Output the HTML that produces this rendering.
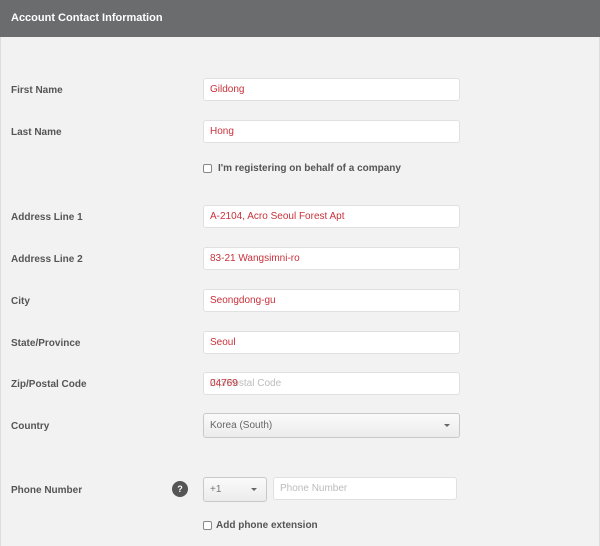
<html><head><style>
body{margin:0;width:600px;height:546px;background:#f2f2f2;font-family:"Liberation Sans",sans-serif;position:relative;overflow:hidden}
.hd{position:absolute;left:0;top:0;width:600px;height:37px;background:#6b6c6e;color:#fff;font-weight:bold;font-size:11px;line-height:37px;text-indent:11px}
.lb{position:absolute;left:11px;font-size:10px;color:#555;font-weight:bold}
.in{position:absolute;left:203px;width:255px;height:21px;background:#fff;border:1px solid #e0e0e0;border-radius:3px;font-size:10px;line-height:21px;color:#c8313a;text-indent:6px}
.cb{position:absolute;left:203px;width:7px;height:7px;border:1px solid #888;border-radius:2px;background:#fff}
.ct{position:absolute;left:218px;font-size:10px;color:#555;font-weight:bold}
</style></head><body>
<div style="position:absolute;left:0;top:0;width:598px;height:546px;border-left:1px solid #ddd;border-right:1px solid #ddd"></div>
<div class="hd">Account Contact Information</div>
<div class="lb" style="top:85px">First Name</div><div class="in" style="top:78px">Gildong</div>
<div class="lb" style="top:127px">Last Name</div><div class="in" style="top:120px">Hong</div>
<div class="cb" style="top:164px"></div><div class="ct" style="top:163px">I'm registering on behalf of a company</div>
<div class="lb" style="top:212px">Address Line 1</div><div class="in" style="top:205px">A-2104, Acro Seoul Forest Apt</div>
<div class="lb" style="top:254px">Address Line 2</div><div class="in" style="top:247px">83-21 Wangsimni-ro</div>
<div class="lb" style="top:296px">City</div><div class="in" style="top:289px">Seongdong-gu</div>
<div class="lb" style="top:338px">State/Province</div><div class="in" style="top:331px">Seoul</div>
<div class="lb" style="top:379px">Zip/Postal Code</div><div class="in" style="top:372px;color:#bbb">Zip/Postal Code<span style="position:absolute;left:0;top:0;color:#c8313a;background:transparent">04769</span></div>
<div class="lb" style="top:421px">Country</div>
<div class="in" style="top:413px;height:23px;line-height:23px;color:#666;background:linear-gradient(#fafafa,#ececec);border-color:#c8c8c8">Korea (South)<span style="position:absolute;right:9px;top:10px;width:0;height:0;border:3px solid transparent;border-top:3px solid #666"></span></div>
<div class="lb" style="top:485px">Phone Number</div>
<div style="position:absolute;left:172px;top:481px;width:16px;height:16px;border-radius:50%;background:#555;color:#fff;font-size:9px;font-weight:bold;text-align:center;line-height:16px">?</div>
<div class="in" style="top:477px;width:62px;height:23px;line-height:23px;color:#777;background:linear-gradient(#fafafa,#ececec);border-color:#c8c8c8">+1<span style="position:absolute;right:9px;top:10px;width:0;height:0;border:3px solid transparent;border-top:3px solid #666"></span></div>
<div class="in" style="top:477px;left:273px;width:182px;color:#bbb">Phone Number</div>
<div class="cb" style="top:521px"></div><div class="ct" style="top:520px;left:216px">Add phone extension</div>
</body></html>
